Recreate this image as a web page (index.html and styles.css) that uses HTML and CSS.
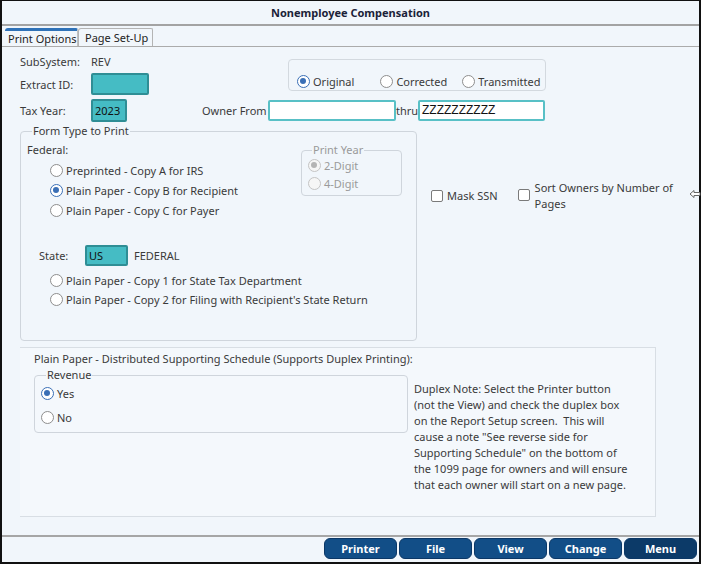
FILE: index.html
```html
<!DOCTYPE html>
<html>
<head>
<meta charset="utf-8">
<link rel="stylesheet" href="styles.css">
</head>
<body>
<div class="window">
  <div class="titlebar">Nonemployee Compensation</div>
  <div class="tabs">
    <div class="tab active">Print Options</div>
    <div class="tab">Page Set-Up</div>
  </div>
  <div class="content">
    <div class="top">
      <div class="top-left">
        <div class="row r-sub"><span class="lbl">SubSystem:</span><span>REV</span></div>
        <div class="row r-extract"><span class="lbl">Extract ID:</span><span class="inp teal w-extract"></span></div>
      </div>
      <div class="statusbox">
        <label class="radio on"><span class="rb"></span>Original</label>
        <label class="radio"><span class="rb"></span>Corrected</label>
        <label class="radio"><span class="rb"></span>Transmitted</label>
      </div>
    </div>
    <div class="row r-tax">
      <span class="lbl">Tax Year:</span><span class="inp teal w-year">2023</span>
      <span class="lbl-owner">Owner From</span><span class="inp white w-owner"></span><span class="thru">thru</span><span class="inp white w-owner2">ZZZZZZZZZZ</span>
    </div>
    <div class="middle">
      <fieldset class="fs form-type">
        <legend>Form Type to Print</legend>
        <div class="fed">
          <div class="fed-left">
            <div class="fed-lbl">Federal:</div>
            <label class="radio opt"><span class="rb"></span>Preprinted - Copy A for IRS</label>
            <label class="radio opt on"><span class="rb"></span>Plain Paper - Copy B for Recipient</label>
            <label class="radio opt"><span class="rb"></span>Plain Paper - Copy C for Payer</label>
          </div>
          <fieldset class="fs printyear">
            <legend>Print Year</legend>
            <label class="radio dis on"><span class="rb"></span>2-Digit</label>
            <label class="radio dis"><span class="rb"></span>4-Digit</label>
          </fieldset>
        </div>
        <div class="state-row"><span class="state-lbl">State:</span><span class="inp teal w-state">US</span><span>FEDERAL</span></div>
        <label class="radio opt"><span class="rb"></span>Plain Paper - Copy 1 for State Tax Department</label>
        <label class="radio opt"><span class="rb"></span>Plain Paper - Copy 2 for Filing with Recipient's State Return</label>
      </fieldset>
      <div class="checks">
        <label class="check"><span class="cb"></span>Mask SSN</label>
        <label class="check sort"><span class="cb"></span><span class="sort-text">Sort Owners by Number of Pages</span></label>
      </div>
      <svg class="handle" width="12" height="10" viewBox="0 0 12 10"><path d="M1 5 L5 1.5 L5 3.5 L11 3.5 L11 6.5 L5 6.5 L5 8.5 Z" fill="#fff" stroke="#666" stroke-width="1"/></svg>
    </div>
    <div class="panel">
      <div class="panel-title">Plain Paper - Distributed Supporting Schedule (Supports Duplex Printing):</div>
      <div class="panel-body">
        <fieldset class="fs revenue">
          <legend>Revenue</legend>
          <label class="radio on"><span class="rb"></span>Yes</label>
          <label class="radio"><span class="rb"></span>No</label>
        </fieldset>
        <p class="note">Duplex Note: Select the Printer button (not the View) and check the duplex box on the Report Setup screen.&nbsp; This will cause a note "See reverse side for Supporting Schedule" on the bottom of the 1099 page for owners and will ensure that each owner will start on a new page.</p>
      </div>
    </div>
  </div>
  <div class="footer">
    <button class="btn">Printer</button>
    <button class="btn">File</button>
    <button class="btn">View</button>
    <button class="btn">Change</button>
    <button class="btn dark">Menu</button>
  </div>
</div>
</body>
</html>
```
FILE: styles.css
```css
* { box-sizing: border-box; }
html, body { margin: 0; padding: 0; }
body {
  width: 701px; height: 564px; overflow: hidden;
  font-family: "Noto Sans", "Open Sans", sans-serif;
  font-size: 11px; color: #3a3a3a;
}
.window {
  width: 701px; height: 564px;
  border: 2px solid #111;
  border-top-width: 1px;
  background: #f1f6fb;
  display: flex; flex-direction: column;
}
.titlebar {
  height: 25px; line-height: 23px;
  text-align: center; font-weight: bold; color: #1b2238;
  border-bottom: 2px solid #a3a3a3;
  flex: none;
}
.tabs {
  height: 21px; flex: none;
  display: flex; align-items: flex-end;
  border-bottom: 1px solid #ababab;
  padding-left: 2px;
}
.tab {
  height: 18px; line-height: 17px;
  color: #222;
  border: 1px solid #b4b4b4; border-bottom: none;
  border-radius: 3px 2px 0 0;
  white-space: nowrap;
}
.tab.active {
  border: none; border-top: 3px solid #2f72b8;
  line-height: 15px;
  width: 73px;
  padding: 0 0 0 3px;
  margin-left: 1px;
  border-right: 1px solid #c0c0c0;
}
.tab + .tab { width: 75px; padding: 0 0 0 6px; }
.content { flex: 1; padding-left: 18px; display: flex; flex-direction: column; }
.row { display: flex; align-items: center; white-space: nowrap; }
.lbl { width: 71px; flex: none; }
.top { display: flex; }
.top-left { width: 268px; flex: none; }
.r-sub { margin-top: 6px; height: 16px; }
.r-extract { margin-top: 4px; height: 22px; }
.r-tax { margin-top: 4px; height: 23px; }
.inp {
  display: inline-block; height: 22px; line-height: 20px;
  padding-left: 2px; color: #111; flex: none;
}
.teal { background: #45bcc4; border: 2px solid #2f8e95; border-radius: 2px; }
.white { background: #fff; border: 2px solid #58c0c6; border-radius: 2px; height: 21px; line-height: 17px; }
.w-extract { width: 58px; }
.w-year { width: 36px; height: 23px; }
.lbl-owner { margin-left: 75px; width: 66px; flex: none; }
.w-owner { width: 128px; }
.thru { width: 22px; flex: none; }
.w-owner2 { width: 127px; font-family: "Liberation Sans", sans-serif; font-size: 12px; }
.statusbox {
  margin-top: 12px; width: 258px; height: 32px;
  border: 1px solid #d3d9df; border-radius: 4px;
  display: flex; align-items: flex-end; padding: 0 0 0 8px;
  white-space: nowrap;
}
.statusbox .radio { height: 18px; }
.statusbox .radio:nth-child(2) { margin-left: 26px; }
.statusbox .radio:nth-child(3) { margin-left: 15px; }
.radio { display: flex; align-items: center; height: 16px; white-space: nowrap; }
.rb {
  width: 13px; height: 13px; border-radius: 50%;
  border: 1px solid #8e8e8e; background: #fff;
  margin-right: 3px; flex: none; position: relative;
}
.radio.on .rb { border: 1.5px solid #3a6fb6; }
.radio.on .rb::after {
  content: ""; position: absolute; left: 2px; top: 2px;
  width: 6px; height: 6px; border-radius: 50%; background: #3a6fb6;
}
.radio.dis { color: #9a9a9a; }
.radio.dis .rb { border: 1px solid #c4c4c4; background: #f6f6f6; }
.radio.dis.on .rb::after { background: #b4b4b4; }
.middle { display: flex; margin-top: 1px; }
.fs {
  margin: 0; border: 1px solid #cfd5dc; border-radius: 4px;
  padding: 0;
}
.fs legend { padding: 0 1px; margin-left: 5px; line-height: 16px; }
.form-type { width: 397px; height: 218px; padding: 3px 0 0 6px; }
.fed { display: flex; }
.fed-left { width: 274px; }
.fed-lbl { height: 16px; line-height: 16px; }
.opt { margin-left: 23px; margin-top: 4px; }
.printyear { width: 101px; height: 54px; padding: 0 0 0 6px; margin-top: 0; color: #9a9a9a; }
.printyear legend { margin-left: 4px; color: #9a9a9a; }
.printyear .radio { height: 18px; }
.printyear .radio:first-of-type { margin-top: -2px; }
.state-row { display: flex; align-items: center; margin-top: 27px; margin-left: 12px; height: 20px; }
.state-lbl { width: 46px; }
.w-state { width: 43px; height: 21px; line-height: 17px; margin-right: 6px; }
.state-row + .opt { margin-top: 7px; }
.state-row + .opt + .opt { margin-top: 3px; }
.checks { display: flex; margin-top: 59px; margin-left: 14px; align-items: flex-start; height: 32px; }
.check { display: flex; align-items: flex-start; white-space: nowrap; }
.cb {
  width: 12px; height: 12px; border: 1px solid #7a7a7a; border-radius: 2px;
  background: #fff; margin-right: 4px; margin-top: 7px; flex: none;
}
.check.sort { margin-left: 20px; margin-top: -2px; }
.check.sort .cb { margin-top: 9px; margin-right: 5px; }
.sort-text { width: 150px; line-height: 16px; white-space: normal; }
.check:first-child { line-height: 16px; padding-top: 6px; }
.check:first-child .cb { margin-top: 2px; }
.handle { margin-top: 66px; margin-left: auto; margin-right: -2px; flex: none; }
.panel {
  margin-top: 6px; width: 636px; height: 170px;
  border: 1px solid #d8dee4; border-left: none;
  background: #f4f8fc;
  padding: 3px 0 0 14px;
}
.panel-title { line-height: 16px; }
.panel-body { display: flex; }
.revenue { width: 374px; height: 66px; padding: 0 0 0 6px; }
.revenue .radio { height: 20px; }
.revenue .radio + .radio { margin-top: 4px; }
.note { margin: 14px 0 0 6px; width: 217px; line-height: 16px; }
.footer {
  flex: none; height: 27px;
  border-top: 2px solid #a6a6a6;
  display: flex; justify-content: flex-end; align-items: flex-start;
  padding: 1px 2px 0 0; gap: 2px;
}
.btn {
  width: 73px; height: 21px; padding: 0;
  background: #124e87; color: #fff;
  border: 1px solid #0b3766; border-radius: 6px;
  font-family: "Noto Sans", sans-serif; font-weight: bold; font-size: 11px;
}
.btn.dark { background: #0c3a68; }
```
